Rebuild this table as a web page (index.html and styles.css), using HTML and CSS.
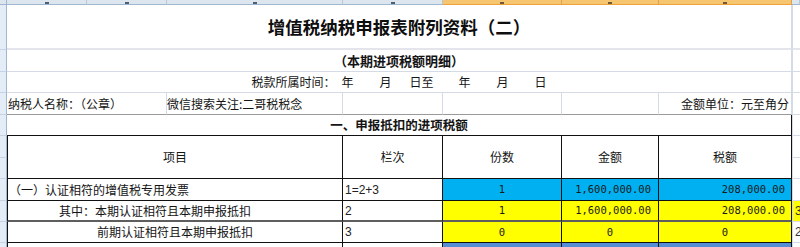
FILE: index.html
```html
<!DOCTYPE html>
<html lang="zh-CN">
<head>
<meta charset="utf-8">
<title>增值税纳税申报表附列资料（二）</title>
<link rel="stylesheet" href="styles.css">
</head>
<body>
<div class="sheet">
  <!-- column headers -->
  <div class="ch corner"></div>
  <div class="ch"><i></i></div>
  <div class="ch"><i></i></div>
  <div class="ch"><i></i></div>
  <div class="ch"><i></i></div>
  <div class="ch sel"><i></i></div>
  <div class="ch sel"><i></i></div>
  <div class="ch sel"><i></i></div>
  <div class="ch"></div>

  <!-- row 1: title -->
  <div class="rh"></div>
  <div class="c span7 center title">增值税纳税申报表附列资料（二）</div>
  <div class="c x title-line"></div>

  <!-- row 2: subtitle -->
  <div class="rh"></div>
  <div class="c span7 center sub">（本期进项税额明细）</div>
  <div class="c x"></div>

  <!-- row 3: period -->
  <div class="rh"></div>
  <div class="c span7 center period">
    <span>税款所属时间：</span><span class="g6">年</span><span class="g26">月</span><span class="g18">日至</span><span class="g25">年</span><span class="g26">月</span><span class="g26">日</span>
  </div>
  <div class="c x"></div>

  <!-- row 4: taxpayer -->
  <div class="rh"></div>
  <div class="c span2 topline pad1">纳税人名称：（公章）</div>
  <div class="c topline">微信搜索关注:二哥税税念</div>
  <div class="c topline"></div>
  <div class="c topline"></div>
  <div class="c topline"></div>
  <div class="c topline right pad-r">金额单位：元至角分</div>
  <div class="c x"></div>

  <!-- row 5: section -->
  <div class="rh"></div>
  <div class="c span7 t center section">一、申报抵扣的进项税额</div>
  <div class="c x"></div>

  <!-- row 6: header (two sheet rows) -->
  <div class="rh"></div>
  <div class="c span3 r2 t first center">项目</div>
  <div class="c r2 t center">栏次</div>
  <div class="c r2 t center">份数</div>
  <div class="c r2 t center">金额</div>
  <div class="c r2 t center">税额</div>
  <div class="c x"></div>
  <div class="rh"></div>
  <div class="c x"></div>

  <!-- row 7 -->
  <div class="rh"></div>
  <div class="c span3 t first pad1">（一）认证相符的增值税专用发票</div>
  <div class="c t num-l">1=2+3</div>
  <div class="c t blue center mono">1</div>
  <div class="c t blue right mono pad-f">1,600,000.00</div>
  <div class="c t blue right mono pad-g">208,000.00</div>
  <div class="c x"></div>

  <!-- row 8 -->
  <div class="rh"></div>
  <div class="c span3 t first thick ind1">其中：本期认证相符且本期申报抵扣</div>
  <div class="c t thick num-l">2</div>
  <div class="c t thick yellow center mono">1</div>
  <div class="c t thick yellow right mono pad-f">1,600,000.00</div>
  <div class="c t thick yellow right mono pad-g">208,000.00</div>
  <div class="c x yellow num-x">3</div>

  <!-- row 9 -->
  <div class="rh"></div>
  <div class="c span3 t first ind2">前期认证相符且本期申报抵扣</div>
  <div class="c t num-l">3</div>
  <div class="c t yellow center mono">0</div>
  <div class="c t yellow center mono">0</div>
  <div class="c t yellow center mono">0</div>
  <div class="c x num-x">2</div>

  <!-- row 10 (partial) -->
  <div class="rh"></div>
  <div class="c span3 t first"></div>
  <div class="c t"></div>
  <div class="c t steel"></div>
  <div class="c t steel"></div>
  <div class="c t steel"></div>
  <div class="c x"></div>
</div>
</body>
</html>
```

FILE: styles.css
```css
html, body {
  margin: 0;
  padding: 0;
  background: #ffffff;
}

body {
  font-family: "Noto Sans CJK SC", "Noto Sans", sans-serif;
  font-size: 12px;
  line-height: 1;
  color: #141414;
  width: 800px;
  height: 247px;
  overflow: hidden;
}

.sheet {
  display: grid;
  grid-template-columns: 7px 80px 80px 176px 100px 119px 97px 133px 8px;
  grid-template-rows: 5px 45px 22px 21px 22px 21px 22px 21px 22px 21px 21px 10px;
  width: 800px;
  height: 247px;
  overflow: hidden;
}

/* column header strip */
.ch {
  box-sizing: border-box;
  background: #dde5ef;
  border-right: 1px solid #b7c6d8;
  border-bottom: 1px solid #9eb6ce;
  display: flex;
  align-items: flex-end;
  justify-content: center;
}
.ch i {
  display: block;
  width: 4px;
  height: 2px;
  background: #4b6075;
}
.ch.corner {
  background: #dde5ef;
  border-right: 1px solid #9eb6ce;
}
.ch.sel {
  background: #f6c56f;
  border-right-color: #e2a04a;
  border-bottom-color: #f0a23a;
}
.ch.sel i {
  background: #6d5a3a;
}

/* row headers */
.rh {
  box-sizing: border-box;
  background: #e4ecf7;
  border-right: 1px solid #9eb6ce;
  border-bottom: 1px solid #c5d3e5;
}

/* cells */
.c {
  box-sizing: border-box;
  display: flex;
  align-items: center;
  white-space: nowrap;
  overflow: hidden;
  border-right: 1px solid #d4dbe6;
  border-bottom: 1px solid #d4dbe6;
  background: #ffffff;
}

.span7 { grid-column: span 7; }
.span3 { grid-column: span 3; }
.span2 { grid-column: span 2; }
.r2 { grid-row: span 2; }

.center { justify-content: center; }
.right { justify-content: flex-end; }

.title {
  font-size: 17.5px;
  font-weight: 700;
  color: #0e0e0e;
  border-bottom: 2px solid #e4e4ec;
}
.title-line {
  border-bottom: 2px solid #e4e4ec;
}

.sub {
  font-size: 13px;
  font-weight: 700;
}

.g6 { margin-left: 6px; }
.g18 { margin-left: 18px; }
.g25 { margin-left: 25px; }
.g26 { margin-left: 26px; }

.topline {
  border-bottom-color: #9a9a9a;
}
.pad1 { padding-left: 1px; }
.pad-r { padding-right: 2px; }

.section {
  font-size: 12.5px;
  font-weight: 700;
}

/* table cells */
.t {
  border-right-color: #111111;
  border-bottom-color: #111111;
}
.first {
  border-left: 1px solid #111111;
}
.thick {
  border-bottom: 2px solid #5e5e5e;
}

.ind1 { padding-left: 51px; }
.ind2 { padding-left: 89px; }

.num-l {
  font-family: "Liberation Sans", Arial, sans-serif;
  font-size: 12px;
  padding-left: 2px;
  color: #222;
}
.num-x {
  font-family: "Liberation Sans", Arial, sans-serif;
  font-size: 12px;
  padding-left: 2px;
  color: #333;
  border-right: none;
}

.mono {
  font-family: "DejaVu Sans Mono", "Liberation Mono", monospace;
  font-size: 10.5px;
  color: #1a1a1a;
}
.pad-f { padding-right: 7px; }
.pad-g { padding-right: 6px; }

.blue { background: #00b0f0; }
.yellow { background: #ffff00; }
.steel { background: #558ed5; }

.x {
  border-right: none;
  border-left: 1px solid #d4dbe6;
}
```
